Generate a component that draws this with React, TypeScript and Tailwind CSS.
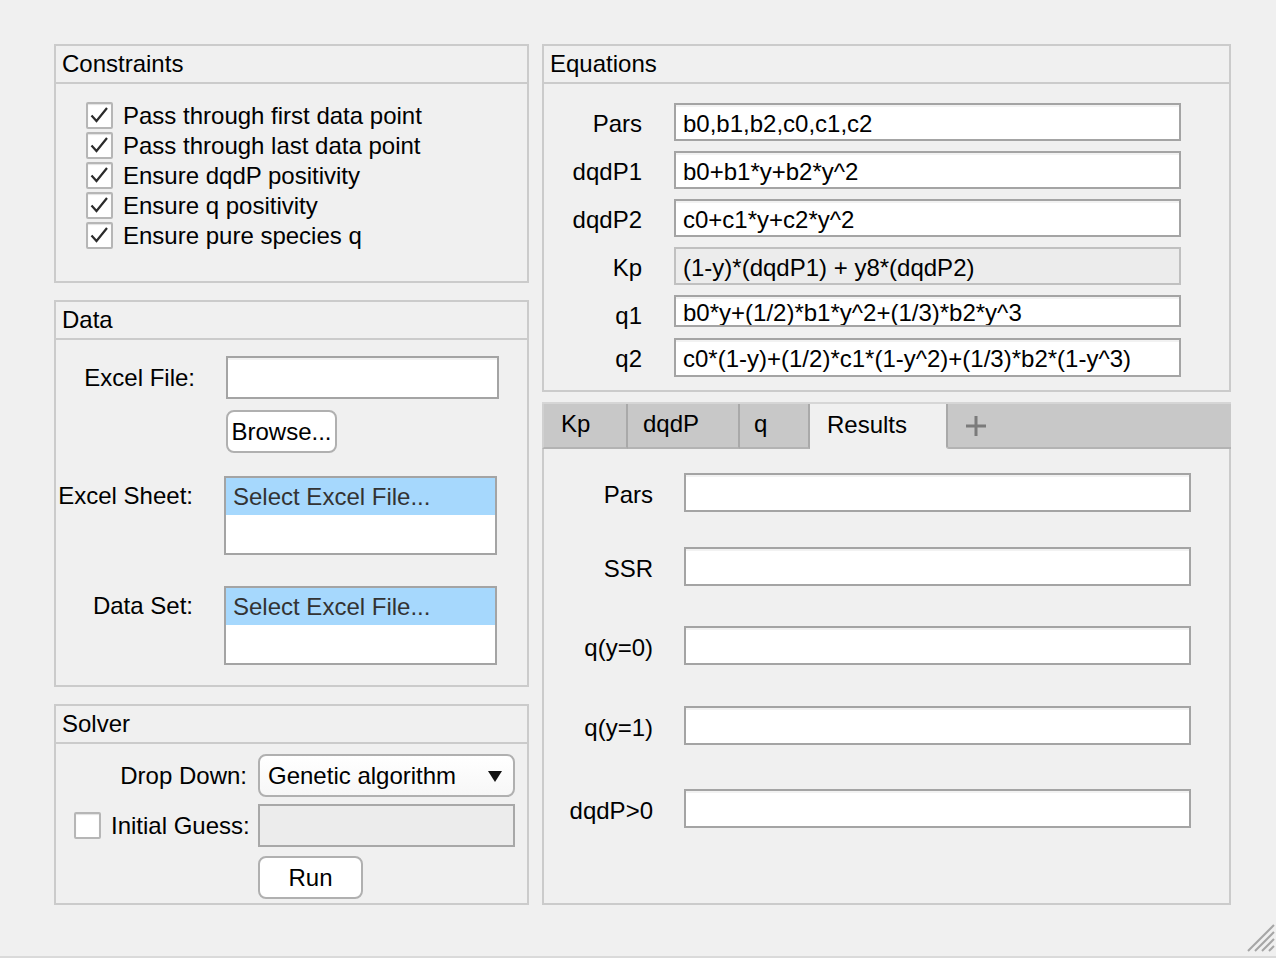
import React from "react";

const FONT = "font-['Liberation_Sans',Arial,Helvetica,sans-serif]";

function Panel({ title, className, children }: { title: string; className?: string; children?: React.ReactNode }) {
  return (
    <div className={`border-2 border-[#cbcbcb] flex flex-col ${className ?? ""}`}>
      <div className="h-[38px] shrink-0 border-b-2 border-[#cbcbcb] flex items-center px-[6px] leading-[28px]">{title}</div>
      <div className="flex-1 flex flex-col">{children}</div>
    </div>
  );
}

function Check({ checked }: { checked?: boolean }) {
  return (
    <div className="w-[27px] h-[27px] shrink-0 border-2 border-[#b6b6b6] bg-white rounded-[2px] flex items-center justify-center shadow-[inset_0_1px_1px_#e2e2e2]">
      {checked && (
        <svg width="23" height="23" viewBox="0 0 23 23">
          <path d="M3.5 11.5 L8.5 17 L19 4" fill="none" stroke="#2b2b2b" strokeWidth="2.2" strokeLinejoin="miter" />
        </svg>
      )}
    </div>
  );
}

function Field({ value, className, disabled }: { value?: string; className?: string; disabled?: boolean }) {
  return (
    <div
      className={`border-2 flex items-center px-[7px] pt-[3px] leading-[28px] whitespace-nowrap overflow-hidden ${
        disabled ? "bg-[#ececec] border-[#c0c0c0]" : "bg-white border-[#a4a4a4] shadow-[inset_0_2px_0_#f2f2f2]"
      } ${className ?? ""}`}
    >
      {value}
    </div>
  );
}

function Button({ label, className }: { label: string; className?: string }) {
  return (
    <div className={`border-2 border-[#b0b0b0] bg-white rounded-[8px] flex items-center justify-center leading-[28px] ${className ?? ""}`}>
      {label}
    </div>
  );
}

function ListBox({ className }: { className?: string }) {
  return (
    <div className={`border-2 border-[#a4a4a4] bg-white flex flex-col ${className ?? ""}`}>
      <div className="h-[37px] bg-[#a6d8fd] flex items-center px-[7px] text-[#333] leading-[28px]">Select Excel File...</div>
    </div>
  );
}

export default function App() {
  return (
    <div className={`${FONT} relative w-[1276px] h-[958px] bg-[#f0f0f0] border-b-2 border-[#dadada] text-[24px] text-black overflow-hidden`}>
      <div className="flex gap-[13px] pl-[54px] pt-[44px]">
        {/* Left column */}
        <div className="w-[475px] flex flex-col gap-[17px]">
          <Panel title="Constraints" className="h-[239px]">
            <div className="pt-[16px] pl-[30px] flex flex-col">
              {["Pass through first data point", "Pass through last data point", "Ensure dqdP positivity", "Ensure q positivity", "Ensure pure species q"].map((t) => (
                <div key={t} className="h-[30px] flex items-center gap-[10px]">
                  <Check checked />
                  <span className="leading-[28px] pt-[2px]">{t}</span>
                </div>
              ))}
            </div>
          </Panel>

          <Panel title="Data" className="h-[387px]">
            <div className="flex flex-col pt-[16px]">
              <div className="flex items-center h-[43px]">
                <div className="w-[139px] text-right leading-[28px]">Excel File:</div>
                <Field className="ml-[31px] w-[273px] h-[43px]" />
              </div>
              <Button label="Browse..." className="ml-[170px] mt-[11px] w-[111px] h-[43px]" />
              <div className="flex items-start mt-[23px]">
                <div className="w-[137px] text-right h-[40px] flex items-center justify-end leading-[28px]">Excel Sheet:</div>
                <ListBox className="ml-[31px] w-[273px] h-[79px]" />
              </div>
              <div className="flex items-start mt-[31px]">
                <div className="w-[137px] text-right h-[40px] flex items-center justify-end leading-[28px]">Data Set:</div>
                <ListBox className="ml-[31px] w-[273px] h-[79px]" />
              </div>
            </div>
          </Panel>

          <Panel title="Solver" className="h-[201px]">
            <div className="flex flex-col pt-[10px]">
              <div className="flex items-center h-[43px]">
                <div className="w-[191px] text-right leading-[28px]">Drop Down:</div>
                <div className="ml-[11px] w-[257px] h-[43px] border-2 border-[#b0b0b0] rounded-[8px] bg-gradient-to-b from-white to-[#f7f7f7] flex items-center justify-between pl-[8px] pr-[10px] leading-[28px]">
                  <span>Genetic algorithm</span>
                  <svg width="16" height="12" viewBox="0 0 16 12">
                    <polygon points="1,1 15,1 8,12" fill="#111" />
                  </svg>
                </div>
              </div>
              <div className="flex items-center h-[43px] mt-[7px]">
                <div className="w-[192px] flex items-center pl-[18px] gap-[10px] whitespace-nowrap">
                  <Check />
                  <span className="leading-[28px]">Initial Guess:</span>
                </div>
                <Field disabled className="ml-[10px] w-[257px] h-[43px] !border-[#a8a8a8]" />
              </div>
              <Button label="Run" className="ml-[202px] mt-[9px] w-[105px] h-[43px]" />
            </div>
          </Panel>
        </div>

        {/* Right column */}
        <div className="w-[689px] flex flex-col gap-[10px]">
          <Panel title="Equations" className="h-[348px]">
            <div className="flex flex-col pt-[19px]">
              {[
                { l: "Pars", v: "b0,b1,b2,c0,c1,c2", mt: "", h: "h-[38px]" },
                { l: "dqdP1", v: "b0+b1*y+b2*y^2", mt: "mt-[10px]", h: "h-[38px]" },
                { l: "dqdP2", v: "c0+c1*y+c2*y^2", mt: "mt-[10px]", h: "h-[38px]" },
                { l: "Kp", v: "(1-y)*(dqdP1) + y8*(dqdP2)", mt: "mt-[10px]", h: "h-[38px]", d: true },
                { l: "q1", v: "b0*y+(1/2)*b1*y^2+(1/3)*b2*y^3", mt: "mt-[10px]", h: "h-[32px]" },
                { l: "q2", v: "c0*(1-y)+(1/2)*c1*(1-y^2)+(1/3)*b2*(1-y^3)", mt: "mt-[5px]", h: "h-[39px]" },
              ].map((r) => (
                <div key={r.l} className={`flex items-start h-[38px] ${r.mt}`}>
                  <div className="w-[98px] h-[38px] flex items-center justify-end leading-[28px] pt-[3px]">{r.l}</div>
                  <Field value={r.v} disabled={r.d} className={`ml-[32px] w-[507px] ${r.h}`} />
                </div>
              ))}
            </div>
          </Panel>

          <div className="h-[503px] flex flex-col">
            <div className="h-[47px] shrink-0 flex border-t-2 border-[#d6d6d6] leading-[28px]">
              <div className="w-[86px] bg-[#c8c8c8] border-l-2 border-l-[#d0d0d0] border-r-2 border-r-[#a9a9a9] border-b-2 border-b-[#b3b3b3] flex items-center pl-[17px] pb-[3px]">Kp</div>
              <div className="w-[112px] bg-[#c8c8c8] border-r-2 border-r-[#a9a9a9] border-b-2 border-b-[#b3b3b3] flex items-center pl-[15px] pb-[3px]">dqdP</div>
              <div className="w-[70px] bg-[#c8c8c8] border-r-2 border-r-[#a9a9a9] border-b-2 border-b-[#b3b3b3] flex items-center pl-[14px] pb-[3px]">q</div>
              <div className="w-[136px] bg-[#f0f0f0] flex items-center pl-[17px] pb-[3px]">Results</div>
              <div className="flex-1 bg-[#c8c8c8] border-l-2 border-l-[#a9a9a9] border-b-2 border-b-[#b3b3b3] rounded-bl-[3px] flex items-center pl-[17px]">
                <svg width="22" height="22" viewBox="0 0 22 22">
                  <path d="M11 1 V21 M1 11 H21" stroke="#7b7b7b" strokeWidth="3" />
                </svg>
              </div>
            </div>
            <div className="flex-1 border-l-2 border-r-2 border-b-2 border-[#cbcbcb] flex flex-col pt-[24px]">
              {[
                { l: "Pars", mt: "" },
                { l: "SSR", mt: "mt-[35px]" },
                { l: "q(y=0)", mt: "mt-[40px]" },
                { l: "q(y=1)", mt: "mt-[41px]" },
                { l: "dqdP>0", mt: "mt-[44px]" },
              ].map((r) => (
                <div key={r.l} className={`flex items-center h-[39px] ${r.mt}`}>
                  <div className="w-[109px] text-right leading-[28px] pt-[5px]">{r.l}</div>
                  <Field className="ml-[31px] w-[507px] h-[39px]" />
                </div>
              ))}
            </div>
          </div>
        </div>
      </div>

      {/* resize grip */}
      <svg className="absolute right-[1px] bottom-[4px]" width="28" height="28" viewBox="0 0 28 28">
        <g stroke="#a6a6a6" strokeWidth="2">
          <line x1="1" y1="27" x2="27" y2="1" />
          <line x1="8" y1="27" x2="27" y2="8" />
          <line x1="15" y1="27" x2="27" y2="15" />
          <line x1="22" y1="27" x2="27" y2="22" />
        </g>
      </svg>
    </div>
  );
}
